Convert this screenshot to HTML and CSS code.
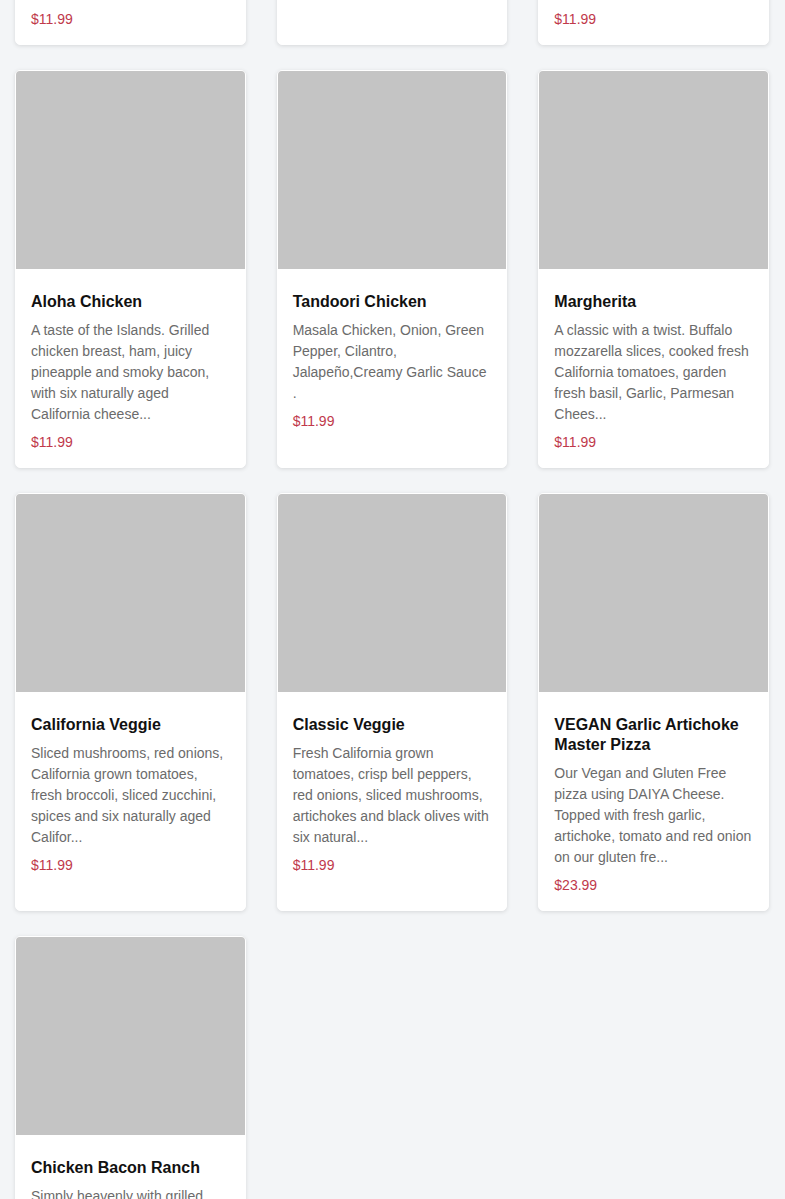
FILE: index.html
```html
<!DOCTYPE html>
<html lang="en">
<head>
    <meta charset="UTF-8">
    <meta name="viewport" content="width=device-width, initial-scale=1.0">
    <title>Pizzas</title>
    <link rel="stylesheet" href="styles.css">
</head>
<body>
    <div class="menu">
        <div class="card">
            <div class="foto"></div>
            <div class="info">
                <h3>Hawaiian</h3>
                <p class="desc">Ham and juicy pineapple on our original red sauce, topped with six naturally aged California cheeses, oregano and a sprinkle of parsley,</p>
                <p class="preco">$11.99</p>
            </div>
        </div>
        <div class="card">
            <div class="foto"></div>
            <div class="info">
                <h3>Cheese</h3>
                <p class="desc">Our original red sauce with six naturally aged California cheeses.</p>
                <p class="preco">$9.99</p>
            </div>
        </div>
        <div class="card">
            <div class="foto"></div>
            <div class="info">
                <h3>Pepperoni</h3>
                <p class="desc">Classic pepperoni on our original red sauce with six naturally aged California cheeses and a touch of oregano...</p>
                <p class="preco">$11.99</p>
            </div>
        </div>

        <div class="card">
            <div class="foto"></div>
            <div class="info">
                <h3>Aloha Chicken</h3>
                <p class="desc">A taste of the Islands. Grilled chicken breast, ham, juicy pineapple and smoky bacon, with six naturally aged California cheese...</p>
                <p class="preco">$11.99</p>
            </div>
        </div>
        <div class="card">
            <div class="foto"></div>
            <div class="info">
                <h3>Tandoori Chicken</h3>
                <p class="desc">Masala Chicken, Onion, Green Pepper, Cilantro, Jalapeño,Creamy Garlic Sauce .</p>
                <p class="preco">$11.99</p>
            </div>
        </div>
        <div class="card">
            <div class="foto"></div>
            <div class="info">
                <h3>Margherita</h3>
                <p class="desc">A classic with a twist. Buffalo mozzarella slices, cooked fresh California tomatoes, garden fresh basil, Garlic, Parmesan Chees...</p>
                <p class="preco">$11.99</p>
            </div>
        </div>

        <div class="card">
            <div class="foto"></div>
            <div class="info">
                <h3>California Veggie</h3>
                <p class="desc">Sliced mushrooms, red onions, California grown tomatoes, fresh broccoli, sliced zucchini, spices and six naturally aged Califor...</p>
                <p class="preco">$11.99</p>
            </div>
        </div>
        <div class="card">
            <div class="foto"></div>
            <div class="info">
                <h3>Classic Veggie</h3>
                <p class="desc">Fresh California grown tomatoes, crisp bell peppers, red onions, sliced mushrooms, artichokes and black olives with six natural...</p>
                <p class="preco">$11.99</p>
            </div>
        </div>
        <div class="card">
            <div class="foto"></div>
            <div class="info">
                <h3>VEGAN Garlic Artichoke Master Pizza</h3>
                <p class="desc">Our Vegan and Gluten Free pizza using DAIYA Cheese. Topped with fresh garlic, artichoke, tomato and red onion on our gluten fre...</p>
                <p class="preco">$23.99</p>
            </div>
        </div>

        <div class="card">
            <div class="foto"></div>
            <div class="info">
                <h3>Chicken Bacon Ranch</h3>
                <p class="desc">Simply heavenly with grilled chicken, smoky bacon, red onions and creamy ranch dressing with six naturally aged Californ...</p>
                <p class="preco">$11.99</p>
            </div>
        </div>
    </div>
</body>
</html>
```

FILE: styles.css
```css
body {
    font-family: "Liberation Sans", Arial, sans-serif;
    background-color: #f3f5f7;
    margin: 0;
    padding: 0;
}

.menu {
    display: grid;
    grid-template-columns: repeat(3, 1fr);
    column-gap: 31px;
    row-gap: 25px;
    padding: 0 16px 40px 15px;
    margin-top: -353px;
}

.card {
    background: white;
    border: 1px solid #fff;
    border-radius: 5px;
    box-shadow: 0 1px 4px rgba(0, 0, 0, 0.12);
    overflow: hidden;
    display: flex;
    flex-direction: column;
}

.foto {
    height: 198px;
    background-color: #c4c4c4;
}

.info {
    padding: 23px 15px 14px 15px;
}

h3 {
    margin: 0;
    font-size: 16px;
    line-height: 20px;
    font-weight: bold;
    color: #111;
}

.desc {
    margin: 8px 0 0 0;
    font-size: 14px;
    line-height: 21px;
    color: #6b6b6b;
}

.preco {
    margin: 7px 0 0 0;
    font-size: 14px;
    line-height: 21px;
    color: #c0394b;
}
```
